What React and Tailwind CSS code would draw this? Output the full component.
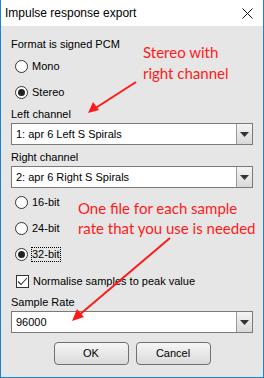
import React from "react";

const ui = { fontFamily: '"Liberation Sans", Arial, sans-serif' };
const note = { fontFamily: 'Lato, "Open Sans", sans-serif' };

const Radio = ({ label, checked, focus, className = "" }) => (
  <div className={`flex items-center h-[14px] pl-[4px] ${className}`}>
    <span className="w-[13px] h-[13px] rounded-full border border-[#333] bg-white flex items-center justify-center">
      {checked && <span className="w-[7px] h-[7px] rounded-full bg-[#222]" />}
    </span>
    <span
      className={`ml-[4px] text-[11px] text-black leading-[13px] ${
        focus ? "outline outline-1 outline-dotted outline-black" : ""
      }`}
    >
      {label}
    </span>
  </div>
);

const Combo = ({ value, className = "" }) => (
  <div className={`flex h-[22px] border border-[#7a7a7a] bg-white ${className}`}>
    <div className="flex-1 flex items-center pl-[4px] text-[11px] text-black">{value}</div>
    <div className="w-[16px] border-l border-[#9a9a9a] bg-gradient-to-b from-[#f4f4f4] to-[#d9d9d9] flex items-center justify-center">
      <svg width="9" height="5" viewBox="0 0 9 5">
        <polygon points="0,0 9,0 4.5,5" fill="#333" />
      </svg>
    </div>
  </div>
);

const Button = ({ children }) => (
  <button className="w-[75px] h-[23px] rounded-[4px] border border-[#707070] bg-gradient-to-b from-[#f6f6f6] to-[#dadada] text-[11px] text-black">
    {children}
  </button>
);

export default function App() {
  return (
    <div className="relative w-[264px] h-[378px] bg-white" style={ui}>
      <div className="flex flex-col h-full border-x border-b border-[#1883d7]">
        <div className="h-[26px] bg-white flex items-center justify-between pl-[4px] pr-[10px]">
          <span className="text-[12px] text-black">Impulse response export</span>
          <svg width="11" height="11" viewBox="0 0 11 11">
            <path d="M0.5 0.5 L10.5 10.5 M10.5 0.5 L0.5 10.5" stroke="#111" strokeWidth="1" />
          </svg>
        </div>
        <div className="flex-1 bg-[#e6e6e6] flex flex-col px-[10px]">
          <div className="mt-[11px] h-[14px] text-[11px] leading-[14px] text-black">Format is signed PCM</div>
          <Radio label="Mono" className="mt-[8px]" />
          <Radio label="Stereo" checked className="mt-[12px]" />
          <div className="mt-[8px] h-[14px] text-[11px] leading-[14px] text-black">Left channel</div>
          <Combo value="1: apr 6 Left S Spirals" className="mt-[2px]" />
          <div className="mt-[5px] h-[14px] text-[11px] leading-[14px] text-black">Right channel</div>
          <Combo value="2: apr 6 Right S Spirals" className="mt-[2px]" />
          <Radio label="16-bit" className="mt-[7px]" />
          <Radio label="24-bit" className="mt-[12px]" />
          <Radio label="32-bit" checked focus className="mt-[12px]" />
          <div className="mt-[13px] h-[14px] flex items-center pl-[5px]">
            <span className="w-[13px] h-[13px] border border-[#333] bg-white flex items-center justify-center">
              <svg width="11" height="9" viewBox="0 0 11 9">
                <path d="M1 4.5 L4 7.5 L10 1" stroke="#333" strokeWidth="1.1" fill="none" />
              </svg>
            </span>
            <span className="ml-[4px] text-[11px] text-black">Normalise samples to peak value</span>
          </div>
          <div className="mt-[7px] h-[14px] text-[11px] leading-[14px] text-black">Sample Rate</div>
          <Combo value="96000" className="mt-[2px]" />
          <div className="mt-[9px] flex justify-center gap-[7px]">
            <Button>OK</Button>
            <Button>Cancel</Button>
          </div>
        </div>
      </div>

      {/* annotations */}
      <div className="absolute left-[143px] top-[42px] text-[15px] leading-[21px] text-[#ff1a1a]" style={note}>
        <div>Stereo with</div>
        <div>right channel</div>
      </div>
      <div className="absolute left-[78px] top-[198px] text-[15px] leading-[20px] text-[#ff1a1a]" style={note}>
        <div>One file for each sample</div>
        <div>rate that you use is needed</div>
      </div>
      <svg className="absolute left-0 top-0 pointer-events-none" width="264" height="378">
        <line x1="136" y1="82" x2="94" y2="109" stroke="#ff1a1a" strokeWidth="2" />
        <polygon points="88,113 93,102 99,110" fill="#ff1a1a" />
        <line x1="170" y1="238" x2="78" y2="316" stroke="#ff1a1a" strokeWidth="2" />
        <polygon points="72,321 77,309 84,317" fill="#ff1a1a" />
      </svg>
    </div>
  );
}
